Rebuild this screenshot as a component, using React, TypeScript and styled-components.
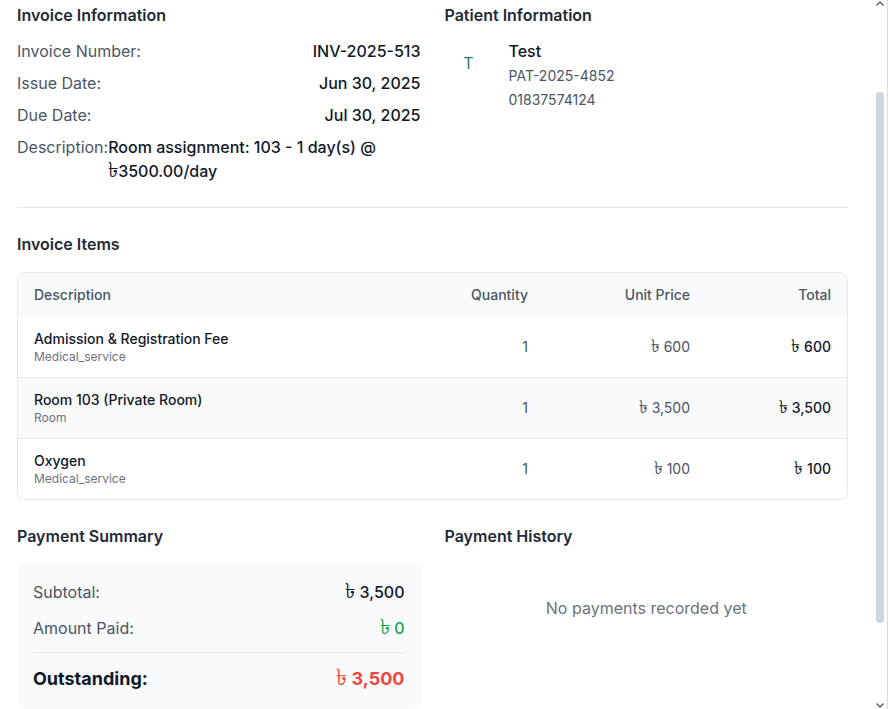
import React from "react";
import styled, { createGlobalStyle } from "styled-components";

const Global = createGlobalStyle`
  html, body { margin: 0; padding: 0; background: #ffffff; }
  body { font-family: Inter, "Noto Sans", "DejaVu Sans", sans-serif; color: #111827; }
  * { box-sizing: border-box; }
`;

const Viewport = styled.div`
  position: relative;
  height: 100vh;
  overflow: hidden;
  background: #ffffff;
`;

const Body = styled.div`
  padding: 3px 40px 0 17px;
`;

/* scrollbar drawn over the page's right edge */
const ScrollTrack = styled.div`
  position: absolute;
  top: 0;
  right: 0;
  bottom: 0;
  width: 15px;
  background: #ffffff;
  border-right: 1px solid #d9dde3;
`;

const ScrollThumb = styled.div`
  position: absolute;
  left: 3px;
  top: 92px;
  width: 8px;
  height: 531px;
  border-radius: 4px;
  background: #cdd6e1;
`;

const ArrowIcon = styled.svg<{ $bottom?: boolean }>`
  position: absolute;
  left: 3px;
  ${(p) => (p.$bottom ? "bottom: 1px;" : "top: 1px;")}
  width: 8px;
  height: 5px;
`;

const TwoCol = styled.div`
  display: grid;
  grid-template-columns: 1fr 1fr;
  gap: 24px;
`;

const SectionTitle = styled.h3<{ $mb?: number }>`
  margin: 0 0 ${(p) => p.$mb ?? 12}px;
  font-size: 16px;
  line-height: 24px;
  font-weight: 600;
  color: #1f2937;
`;

const InfoList = styled.div`
  display: flex;
  flex-direction: column;
  gap: 8px;
`;

const InfoRow = styled.div`
  display: flex;
  justify-content: space-between;
  font-size: 16px;
  line-height: 24px;
`;

const InfoLabel = styled.span`
  color: #4b5563;
  white-space: nowrap;
`;

const InfoValue = styled.span`
  color: #111827;
  font-weight: 500;
  text-align: left;
`;

const Patient = styled.div`
  display: flex;
  gap: 16px;
`;

const Avatar = styled.div`
  width: 48px;
  height: 48px;
  border-radius: 50%;
  flex-shrink: 0;
  display: flex;
  align-items: center;
  justify-content: center;
  font-size: 16px;
  color: #2f7d68;
`;

const PatientText = styled.div`
  display: flex;
  flex-direction: column;
`;

const PatientName = styled.div`
  font-size: 16px;
  line-height: 24px;
  font-weight: 500;
  color: #111827;
  margin-bottom: 1px;
`;

const PatientMeta = styled.div`
  font-size: 14px;
  line-height: 24px;
  color: #4b5563;
`;

const Divider = styled.hr`
  border: 0;
  border-top: 1px solid #e5e7eb;
  margin: 24px 0;
`;

const Table = styled.div`
  border: 1px solid #e5e7eb;
  border-radius: 8px;
  overflow: hidden;
  margin-bottom: 24px;
`;

const Row = styled.div<{ $head?: boolean; $alt?: boolean }>`
  display: grid;
  grid-template-columns: 1fr 140px 162px 141px;
  align-items: center;
  padding: 12px 16px;
  background: ${(p) => (p.$head || p.$alt ? "#f9fafb" : "#ffffff")};
  border-top: ${(p) => (p.$head ? "0" : "1px solid #e5e7eb")};
  &:nth-child(2) { border-top: 0; }
`;

const HeadCell = styled.div<{ $right?: boolean }>`
  font-size: 14px;
  line-height: 20px;
  color: #4b5563;
  font-weight: 500;
  text-align: ${(p) => (p.$right ? "right" : "left")};
`;

const ItemName = styled.div`
  font-size: 14px;
  line-height: 20px;
  font-weight: 500;
  color: #111827;
`;

const ItemType = styled.div`
  font-size: 12px;
  line-height: 16px;
  color: #6b7280;
`;

const Cell = styled.div<{ $strong?: boolean }>`
  font-size: 14px;
  line-height: 20px;
  text-align: right;
  color: ${(p) => (p.$strong ? "#111827" : "#4b5563")};
  font-weight: ${(p) => (p.$strong ? 500 : 400)};
`;

const Taka = styled.span`
  font-size: 1.3em;
  line-height: 0;
  font-weight: 400;
`;

const SummaryCard = styled.div`
  background: #f9fafb;
  border-radius: 8px;
  padding: 16px;
  display: flex;
  flex-direction: column;
  gap: 12px;
`;

const SumRow = styled.div`
  display: flex;
  justify-content: space-between;
  font-size: 16px;
  line-height: 24px;
`;

const SumLabel = styled.span`
  color: #4b5563;
`;

const SumValue = styled.span<{ $color?: string }>`
  color: ${(p) => p.$color ?? "#111827"};
  font-weight: 500;
`;

const TotalRow = styled.div`
  display: flex;
  justify-content: space-between;
  border-top: 1px solid #e5e7eb;
  padding-top: 12px;
  font-size: 18px;
  line-height: 28px;
  font-weight: 700;
`;

const TotalLabel = styled.span`
  color: #111827;
`;

const TotalValue = styled.span`
  color: #ef4444;
`;

const Empty = styled.div`
  padding: 32px 0;
  text-align: center;
  font-size: 16px;
  line-height: 24px;
  color: #6b7280;
`;

const Money = ({ v }: { v: string }) => (
  <>
    <Taka>৳</Taka> {v}
  </>
);

const items = [
  { name: "Admission & Registration Fee", type: "Medical_service", qty: 1, price: "600", total: "600" },
  { name: "Room 103 (Private Room)", type: "Room", qty: 1, price: "3,500", total: "3,500" },
  { name: "Oxygen", type: "Medical_service", qty: 1, price: "100", total: "100" },
];

export default function App() {
  return (
    <>
      <Global />
      <Viewport>
        <Body>
          <TwoCol>
            <div>
              <SectionTitle>Invoice Information</SectionTitle>
              <InfoList>
                <InfoRow>
                  <InfoLabel>Invoice Number:</InfoLabel>
                  <InfoValue>INV-2025-513</InfoValue>
                </InfoRow>
                <InfoRow>
                  <InfoLabel>Issue Date:</InfoLabel>
                  <InfoValue>Jun 30, 2025</InfoValue>
                </InfoRow>
                <InfoRow>
                  <InfoLabel>Due Date:</InfoLabel>
                  <InfoValue>Jul 30, 2025</InfoValue>
                </InfoRow>
                <InfoRow>
                  <InfoLabel>Description:</InfoLabel>
                  <InfoValue>
                    Room assignment: 103 - 1 day(s) @ <Taka>৳</Taka>3500.00/day
                  </InfoValue>
                </InfoRow>
              </InfoList>
            </div>
            <div>
              <SectionTitle>Patient Information</SectionTitle>
              <Patient>
                <Avatar>T</Avatar>
                <PatientText>
                  <PatientName>Test</PatientName>
                  <PatientMeta>PAT-2025-4852</PatientMeta>
                  <PatientMeta>01837574124</PatientMeta>
                </PatientText>
              </Patient>
            </div>
          </TwoCol>

          <Divider />

          <SectionTitle $mb={16}>Invoice Items</SectionTitle>
          <Table>
            <Row $head>
              <HeadCell>Description</HeadCell>
              <HeadCell $right>Quantity</HeadCell>
              <HeadCell $right>Unit Price</HeadCell>
              <HeadCell $right>Total</HeadCell>
            </Row>
            {items.map((it, i) => (
              <Row key={it.name} $alt={i % 2 === 1}>
                <div>
                  <ItemName>{it.name}</ItemName>
                  <ItemType>{it.type}</ItemType>
                </div>
                <Cell>{it.qty}</Cell>
                <Cell><Money v={it.price} /></Cell>
                <Cell $strong><Money v={it.total} /></Cell>
              </Row>
            ))}
          </Table>

          <TwoCol>
            <div>
              <SectionTitle $mb={16}>Payment Summary</SectionTitle>
              <SummaryCard>
                <SumRow>
                  <SumLabel>Subtotal:</SumLabel>
                  <SumValue><Money v="3,500" /></SumValue>
                </SumRow>
                <SumRow>
                  <SumLabel>Amount Paid:</SumLabel>
                  <SumValue $color="#16a34a"><Money v="0" /></SumValue>
                </SumRow>
                <TotalRow>
                  <TotalLabel>Outstanding:</TotalLabel>
                  <TotalValue><Money v="3,500" /></TotalValue>
                </TotalRow>
              </SummaryCard>
            </div>
            <div>
              <SectionTitle $mb={16}>Payment History</SectionTitle>
              <Empty>No payments recorded yet</Empty>
            </div>
          </TwoCol>
        </Body>

        <ScrollTrack>
          <ArrowIcon viewBox="0 0 8 5">
            <path d="M0.5 4.5 L4 1 L7.5 4.5" fill="none" stroke="#5f6368" strokeWidth="1.5" />
          </ArrowIcon>
          <ScrollThumb />
          <ArrowIcon $bottom viewBox="0 0 8 5">
            <path d="M0.5 0.5 L4 4 L7.5 0.5" fill="none" stroke="#5f6368" strokeWidth="1.5" />
          </ArrowIcon>
        </ScrollTrack>
      </Viewport>
    </>
  );
}
